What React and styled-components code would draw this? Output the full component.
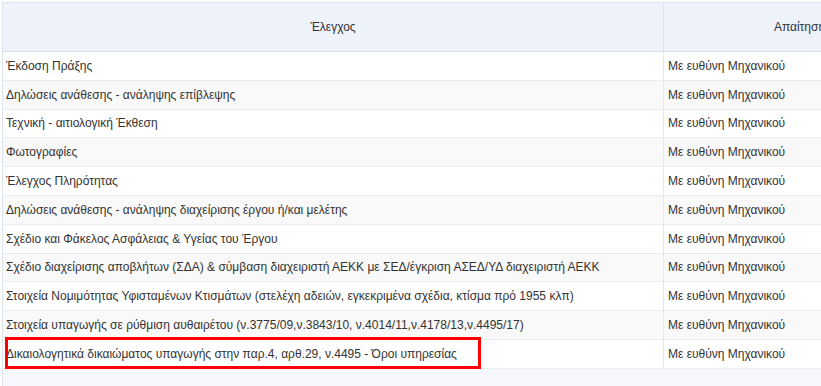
import React from 'react'
import styled, { createGlobalStyle } from 'styled-components'

const GlobalStyle = createGlobalStyle`
  html, body {
    margin: 0;
    padding: 0;
    background: #fff;
    overflow: hidden;
  }
  body {
    font-family: 'Liberation Sans', Arial, sans-serif;
  }
`

const Page = styled.div`
  width: 821px;
  height: 386px;
  padding: 2px 0 0 2px;
  box-sizing: border-box;
  overflow: hidden;
`

const Panel = styled.div`
  width: 937px;
  height: 400px;
  background: #f5f7fc;
  border-top: 1px solid #dce3ee;
  border-left: 1px solid #dce3ee;
`

const Grid = styled.div`
  display: grid;
  grid-template-columns: 661px 272px;
`

const HeadCell = styled.div`
  height: 48px;
  display: flex;
  align-items: center;
  justify-content: center;
  background: #eef2fa;
  border-bottom: 1px solid #d6deeb;
  border-right: 1px solid #dce3ee;
  font-size: 12px;
  color: #333;
`

const Cell = styled.div`
  position: relative;
  height: 28.8px;
  box-sizing: border-box;
  display: flex;
  align-items: center;
  padding-left: ${p => (p.$first ? '3px' : '4px')};
  background: ${p => (p.$striped ? '#f9f9f9' : '#fff')};
  border-bottom: 1px solid #ececec;
  border-right: 1px solid #e6e6e6;
  font-size: 12px;
  color: #333;
  white-space: nowrap;
`

const Highlight = styled.div`
  position: absolute;
  left: 2px;
  top: -3px;
  width: 476px;
  height: 32px;
  box-sizing: border-box;
  border: 3px solid #f00;
  pointer-events: none;
`

const rows = [
  'Έκδοση Πράξης',
  'Δηλώσεις ανάθεσης - ανάληψης επίβλεψης',
  'Τεχνική - αιτιολογική Έκθεση',
  'Φωτογραφίες',
  'Έλεγχος Πληρότητας',
  'Δηλώσεις ανάθεσης - ανάληψης διαχείρισης έργου ή/και μελέτης',
  'Σχέδιο και Φάκελος Ασφάλειας & Υγείας του Έργου',
  'Σχέδιο διαχείρισης αποβλήτων (ΣΔΑ) & σύμβαση διαχειριστή ΑΕΚΚ με ΣΕΔ/έγκριση ΑΣΕΔ/ΥΔ διαχειριστή ΑΕΚΚ',
  'Στοιχεία Νομιμότητας Υφισταμένων Κτισμάτων (στελέχη αδειών, εγκεκριμένα σχέδια, κτίσμα πρό 1955 κλπ)',
  'Στοιχεία υπαγωγής σε ρύθμιση αυθαιρέτου (ν.3775/09,ν.3843/10, ν.4014/11,ν.4178/13,ν.4495/17)',
  'Δικαιολογητικά δικαιώματος υπαγωγής στην παρ.4, αρθ.29, ν.4495 - Όροι υπηρεσίας',
]

export default function App() {
  return (
    <Page>
      <GlobalStyle />
      <Panel>
        <Grid>
          <HeadCell>Έλεγχος</HeadCell>
          <HeadCell>Απαίτηση</HeadCell>
          {rows.map((label, idx) => (
            <React.Fragment key={idx}>
              <Cell $first $striped={idx % 2 === 1}>
                {label}
                {idx === rows.length - 1 ? <Highlight /> : null}
              </Cell>
              <Cell $striped={idx % 2 === 1}>Με ευθύνη Μηχανικού</Cell>
            </React.Fragment>
          ))}
        </Grid>
      </Panel>
    </Page>
  )
}
